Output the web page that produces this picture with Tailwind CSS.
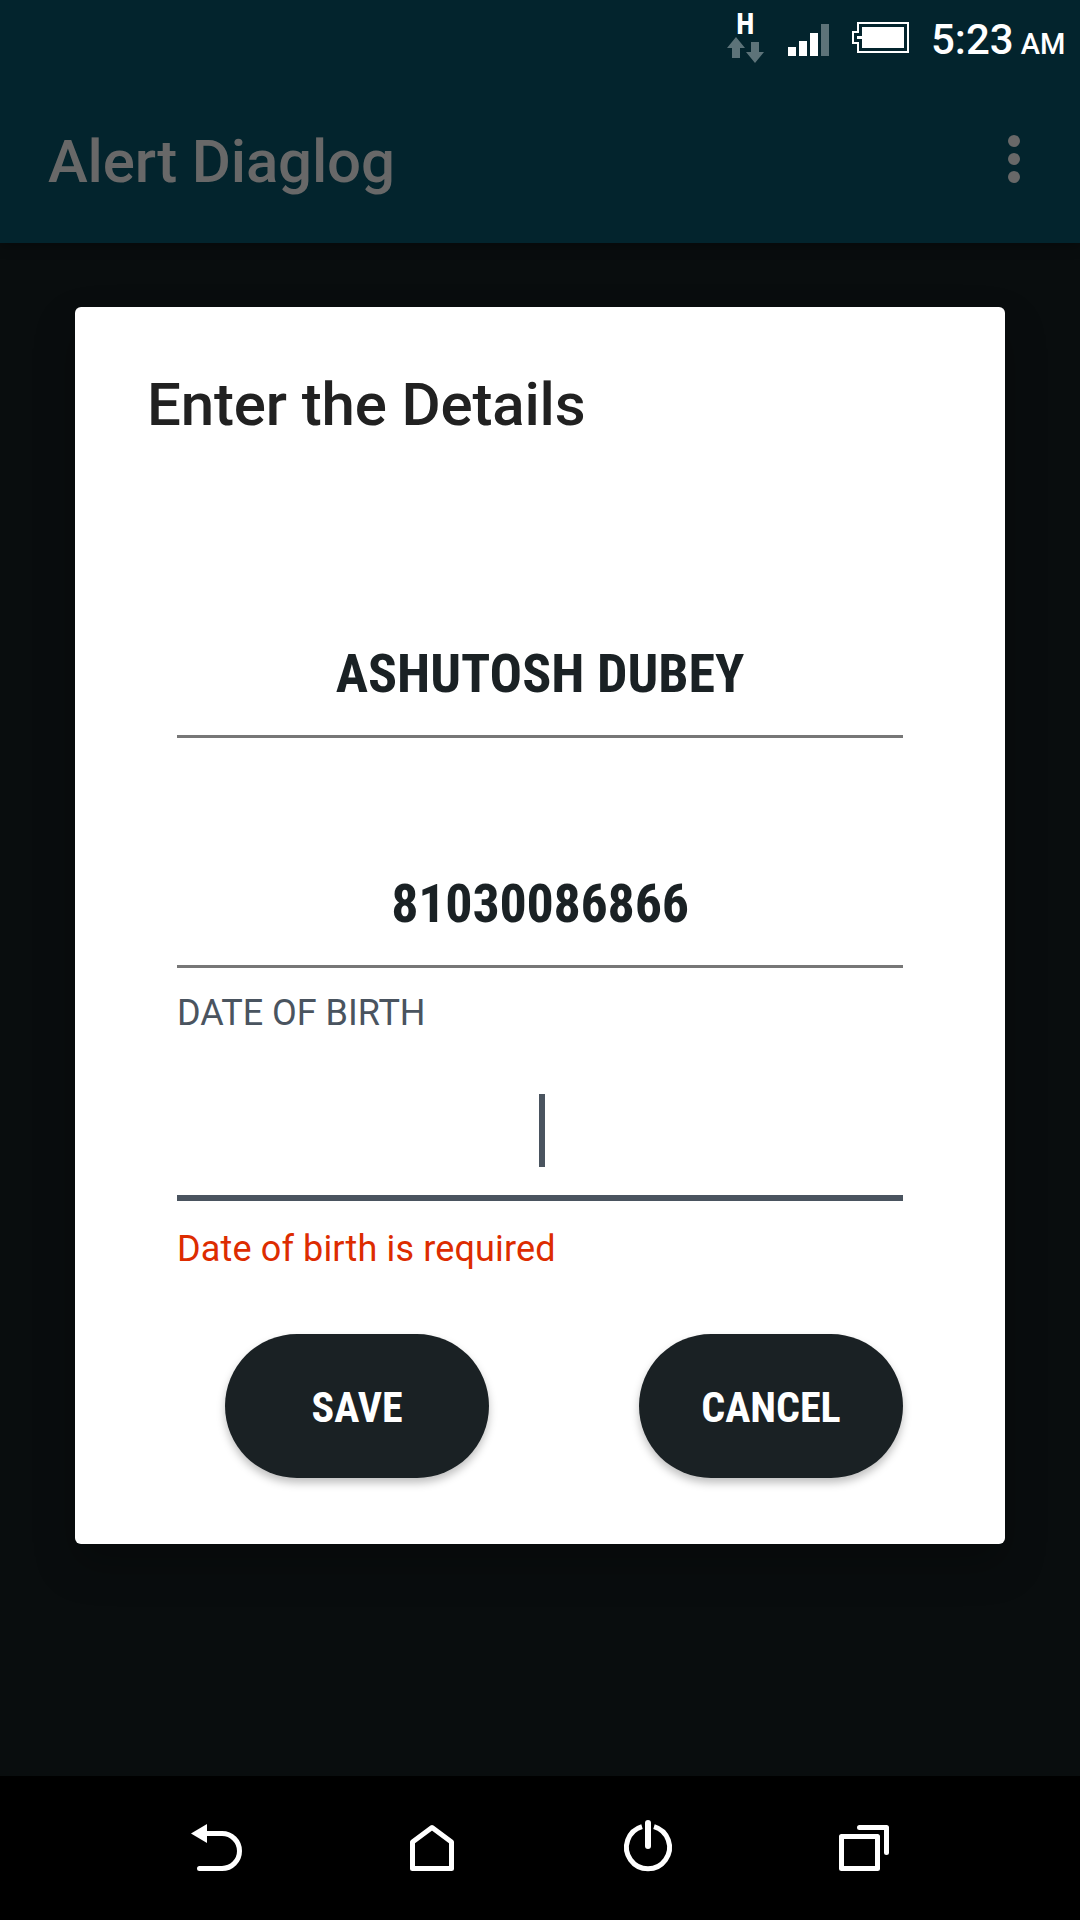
<!DOCTYPE html>
<html lang="en">
<head>
<meta charset="utf-8">
<title>Alert Diaglog</title>
<script src="https://cdn.jsdelivr.net/npm/@tailwindcss/browser@4"></script>
</head>
<body class="flex h-[1920px] w-[1080px] flex-col overflow-hidden bg-[#090d0e] font-['Roboto',sans-serif]">
  <header class="h-[243px] shrink-0 bg-[#03242d] shadow-[0_3px_12px_rgba(0,0,0,0.3)]">
    <!-- Status bar -->
    <div class="flex h-[75px] items-start pl-[727px] text-white">
      <div class="flex w-[37px] flex-col items-center pt-[14px]">
        <span class="h-[20px] origin-center scale-x-[0.86] text-[29px] leading-[20px] font-black">H</span>
        <svg class="mt-[3px] h-[26px] w-[37px]" viewBox="0 0 37 26" fill="#5d7379"><path d="M9 0 18 11H13V21H5V11H0ZM24 5H32V15H37L28 26 19 15H24Z"/></svg>
      </div>
      <svg class="mt-[24px] ml-[24px] h-[32px] w-[41px]" viewBox="0 0 41 32" fill="#fff"><path d="M0 23h8v9H0zM11 17h8v15h-8zM22 9h8v23h-8z"/><path fill="#5d7379" d="M33 0h8v32h-8z"/></svg>
      <svg class="mt-[22px] ml-[23px] h-[31px] w-[57px]" viewBox="0 0 57 31"><path d="M6 1H56V30H6V21H1V10H6Z" fill="none" stroke="#fff" stroke-width="2"/><path d="M10 5H52V26H10V17H5V14H10Z" fill="#fff"/></svg>
      <div class="ml-[22px] flex items-baseline pt-[16px] leading-[48px] whitespace-nowrap"><span class="text-[42px] font-medium">5:23</span><span class="ml-[7px] text-[29px] font-medium">AM</span></div>
    </div>
    <!-- Toolbar -->
    <div class="flex h-[168px] items-center justify-between pr-[60px] pl-[48px]">
      <h1 class="pt-[6px] text-[60px] leading-[70px] font-medium tracking-[-0.17px] text-[#686868]">Alert Diaglog</h1>
      <svg class="h-[48px] w-[12px]" viewBox="0 0 12 48" fill="#686868"><circle cx="6" cy="6" r="6"/><circle cx="6" cy="24" r="6"/><circle cx="6" cy="42" r="6"/></svg>
    </div>
  </header>

  <main class="flex-1 px-[75px] pt-[64px]">
    <section class="h-[1237px] rounded-[6px] bg-white px-[102px] shadow-[0_20px_40px_rgba(0,0,0,0.25)]">
      <h2 class="-ml-[30px] pt-[63px] text-[60px] leading-[70px] font-medium tracking-[-0.15px] text-[#212121]">Enter the Details</h2>
      <div class="mt-[199px] flex h-[99px] items-center justify-center border-b-[3px] border-[#777777] pb-[26px] text-[54px] leading-[66px] font-bold text-[#1a2124]">
        <span class="[font-family:'Roboto_Condensed','Roboto',sans-serif] [font-stretch:75%] whitespace-nowrap">ASHUTOSH DUBEY</span>
      </div>
      <div class="mt-[131px] flex h-[99px] items-center justify-center border-b-[3px] border-[#777777] pb-[26px] text-[54px] leading-[66px] font-bold text-[#1a2124]">
        <span class="[font-family:'Roboto_Condensed','Roboto',sans-serif] [font-stretch:75%] tracking-[-0.25px] whitespace-nowrap">81030086866</span>
      </div>
      <label class="mt-[23px] block h-[44px] text-[36px] leading-[44px] tracking-[-0.05px] whitespace-nowrap text-[#4a545f]">DATE OF BIRTH</label>
      <div class="flex h-[166px] justify-center border-b-[6px] border-[#4a545f] pt-[59px] pl-[4px]"><span class="h-[73px] w-[6px] bg-[#4a545f]"></span></div>
      <p class="mt-[26px] text-[36px] leading-[44px] tracking-[0.14px] whitespace-nowrap text-[#dd2c00]">Date of birth is required</p>
      <div class="mt-[63px] flex justify-between pl-[48px] text-[42px] font-bold text-white">
        <button class="flex h-[144px] w-[264px] items-center justify-center rounded-full bg-[#1a2124] pt-[2px] shadow-[0_5px_8px_rgba(0,0,0,0.25)]"><span class="[font-family:'Roboto_Condensed','Roboto',sans-serif] [font-stretch:75%]">SAVE</span></button>
        <button class="flex h-[144px] w-[264px] items-center justify-center rounded-full bg-[#1a2124] pt-[2px] shadow-[0_5px_8px_rgba(0,0,0,0.25)]"><span class="[font-family:'Roboto_Condensed','Roboto',sans-serif] [font-stretch:75%]">CANCEL</span></button>
      </div>
    </section>
  </main>

  <!-- Navigation bar -->
  <nav class="z-10 grid h-[144px] shrink-0 grid-cols-4 bg-black px-[108px]">
    <svg class="h-[144px] w-[216px]" viewBox="108 1776 216 144" fill="none" stroke="#fff" stroke-width="5" stroke-linecap="round"><path d="M206 1833.5H222A17.5 17.5 0 0 1 222 1868.5H199.500"/><path d="M191 1833.500 207 1824V1843Z" fill="#fff" stroke="none"/></svg>
    <svg class="h-[144px] w-[216px]" viewBox="324 1776 216 144" fill="none" stroke="#fff" stroke-width="5" stroke-linejoin="round"><path d="M412.5 1842V1868.500H451.500V1842L432 1827.500Z"/></svg>
    <svg class="h-[144px] w-[216px]" viewBox="540 1776 216 144" fill="none" stroke="#fff" stroke-width="5"><path d="M642 1826.600A21.500 21.500 0 1 0 654 1826.600"/><path d="M648 1823V1846" stroke-width="6" stroke-linecap="round"/></svg>
    <svg class="h-[144px] w-[216px]" viewBox="756 1776 216 144" fill="none" stroke="#fff" stroke-width="5" stroke-linejoin="round" stroke-linecap="round"><path d="M841.500 1836.500H877.500V1868.500H841.500ZM859.500 1827.500H886.500V1852.500"/></svg>
  </nav>
</body>
</html>
